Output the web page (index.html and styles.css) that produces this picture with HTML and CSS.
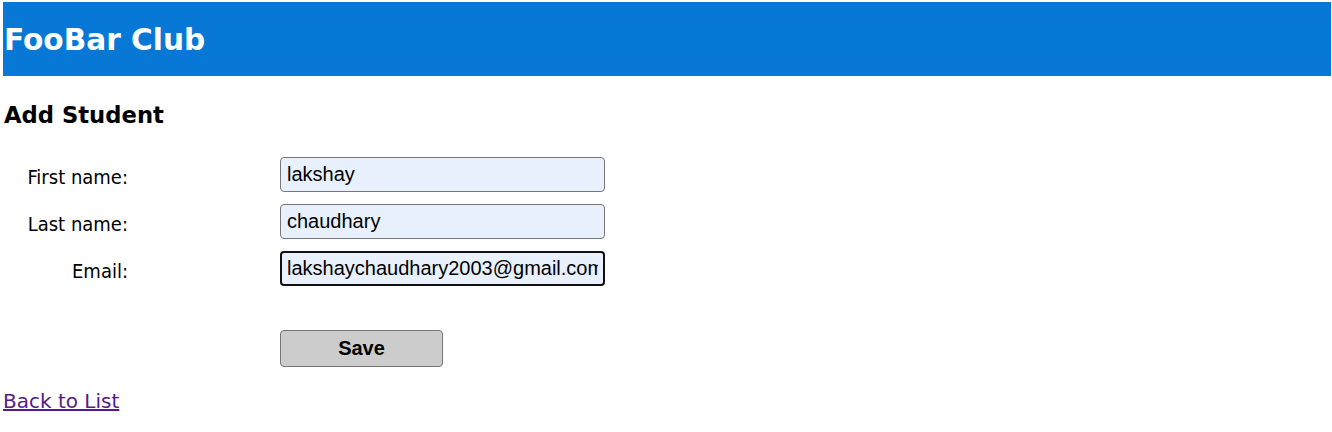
FILE: index.html
```html
<!DOCTYPE html>
<html>
<head>
<meta charset="utf-8">
<link rel="stylesheet" href="styles.css">
</head>
<body>
<header class="topbar"><h1 class="brand">FooBar Club</h1></header>
<h2 class="page-title">Add Student</h2>
<form class="student-form">
  <table class="form-table">
    <tr>
      <td class="label-cell"><label>First name:</label></td>
      <td><input class="field" type="text" value="lakshay"></td>
    </tr>
    <tr>
      <td class="label-cell"><label>Last name:</label></td>
      <td><input class="field" type="text" value="chaudhary"></td>
    </tr>
    <tr>
      <td class="label-cell"><label>Email:</label></td>
      <td><input class="field focused" type="text" value="lakshaychaudhary2003@gmail.com"></td>
    </tr>
    <tr class="spacer-row"><td></td><td></td></tr>
    <tr>
      <td></td>
      <td><button type="button" class="save-btn">Save</button></td>
    </tr>
  </table>
</form>
<a class="back-link" href="#">Back to List</a>
</body>
</html>
```
FILE: styles.css
```css
html, body { margin: 0; padding: 0; background: #fff; }
body {
  padding: 2px 1px 0 3px;
  font-family: "DejaVu Sans", Verdana, sans-serif;
  color: #000;
}
.topbar {
  background: #0878d6;
  height: 74px;
  display: flex;
  align-items: center;
}
.brand {
  margin: 0;
  padding: 2px 0 0 1px;
  color: #fff;
  font-size: 29.6px;
  font-weight: bold;
}
.page-title {
  margin: 24px 0 0 1px;
  font-size: 22.7px;
  font-weight: bold;
  line-height: 30px;
}
.student-form { margin-top: 27px; }
.form-table { border-collapse: separate; border-spacing: 0; }
.form-table td { padding: 0 0 12px 0; }
.form-table td.label-cell {
  width: 125px;
  padding: 4px 152px 12px 0;
  vertical-align: middle;
  text-align: right;
  font-family: "DejaVu Sans Condensed", "DejaVu Sans", sans-serif;
  font-size: 20px;
}
.field {
  box-sizing: border-box;
  width: 325px;
  height: 35px;
  margin: 0;
  padding: 0 6px;
  border: 1px solid #767676;
  border-radius: 4px;
  background: #e8f0fe;
  font-family: "Liberation Sans", Arial, sans-serif;
  font-size: 20px;
  color: #000;
}
.field.focused { border: 2px solid #101010; padding: 0 5px; }
.spacer-row td { height: 32px; padding: 0; }
.save-btn {
  box-sizing: border-box;
  width: 163px;
  height: 37px;
  border: 1px solid #767676;
  border-radius: 4px;
  background: #cccccc;
  font-family: "Liberation Sans", Arial, sans-serif;
  font-weight: bold;
  font-size: 20px;
  color: #000;
}
.back-link {
  display: inline-block;
  margin-top: 10px;
  color: #551a8b;
  font-size: 20px;
}
```
